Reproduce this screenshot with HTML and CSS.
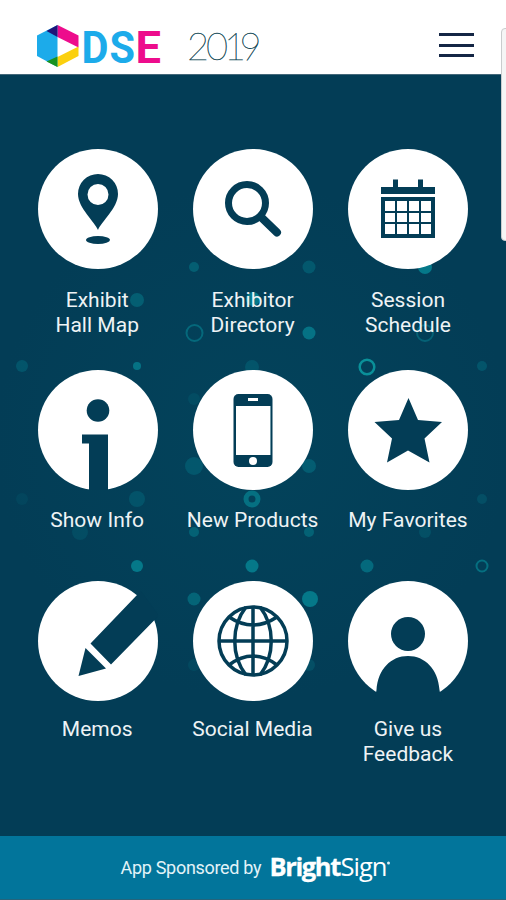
FILE: index.html
```html
<!DOCTYPE html>
<html lang="en">
<head>
<meta charset="utf-8">
<title>DSE 2019</title>
<link rel="stylesheet" href="styles.css">
</head>
<body>
<div class="app">
  <header class="header">
    <svg class="brand" width="240" height="74" viewBox="30 0 240 74">
      <path fill="#1cabea" d="M37 35.5 57.500 25V67L37 56z"/>
      <path fill="#ed0c8c" d="M57.500 25 78.500 35.500V47.500L57.500 37z"/>
      <path fill="#fbd00e" d="M57.500 57 78.500 46.500V56L57.500 67z"/>
      <path fill="#1f1478" d="M46.500 31 57.500 25V37z"/>
      <path fill="#17921f" d="M46.500 61.500 57.500 56.500V67z"/>
      <text class="dse" y="62.500"><tspan x="81.500" textLength="27" lengthAdjust="spacingAndGlyphs">D</tspan><tspan x="109.500" textLength="25.500" lengthAdjust="spacingAndGlyphs">S</tspan><tspan class="dse-e" x="135.500" textLength="25.500" lengthAdjust="spacingAndGlyphs">E</tspan></text>
      <text class="year" x="187 206 224 239.500" y="60">2019</text>
    </svg>
    <div class="menu"><i></i><i></i><i></i></div>
  </header>

  <main class="home">
    <svg class="network" width="506" height="761" viewBox="0 75 506 761">
      <g fill="#057889">
        <circle cx="137" cy="300" r="7" opacity=".55"/>
        <circle cx="194" cy="267" r="5" opacity=".55"/>
        <circle cx="309" cy="267" r="6.500" opacity=".45"/>
        <circle cx="309" cy="333" r="6.500" opacity=".9"/>
        <circle cx="253" cy="299" r="7"/>
        <circle cx="425" cy="267" r="7"/>
        <circle cx="22" cy="366" r="6" opacity=".4"/>
        <circle cx="137" cy="366" r="4" opacity=".9"/>
        <circle cx="482" cy="366" r="5" opacity=".4"/>
        <circle cx="252" cy="367" r="7" opacity=".35"/>
        <circle cx="194" cy="399" r="6" opacity=".2"/>
        <circle cx="194" cy="466" r="9" opacity=".4"/>
        <circle cx="309" cy="466" r="7" opacity=".5"/>
        <circle cx="137" cy="499" r="8" opacity=".35"/>
        <circle cx="22" cy="499" r="6" opacity=".15"/>
        <circle cx="80" cy="532" r="8" opacity=".25"/>
        <circle cx="194" cy="532" r="5" opacity=".6"/>
        <circle cx="309" cy="532" r="5" opacity=".6"/>
        <circle cx="425" cy="532" r="6" opacity=".3"/>
        <circle cx="482" cy="499" r="5" opacity=".3"/>
        <circle cx="137" cy="566" r="6"/>
        <circle cx="252" cy="566" r="6.500"/>
        <circle cx="367" cy="566" r="6.500" opacity=".75"/>
        <circle cx="194" cy="599" r="6.500" opacity=".65"/>
        <circle cx="310" cy="599" r="8"/>
        <circle cx="194" cy="665" r="6" opacity=".2"/>
        <circle cx="309" cy="665" r="6" opacity=".3"/>
      </g>
      <g fill="none" stroke="#078493" stroke-width="2">
        <circle cx="194.500" cy="333" r="8" opacity=".6"/>
        <circle cx="425" cy="333" r="8" opacity=".5"/>
        <circle cx="367" cy="367" r="7.300" stroke-width="2.500" stroke="#0a9099"/>
        <circle cx="252" cy="499" r="6" stroke-width="5" opacity=".7"/>
        <circle cx="482" cy="566" r="5.500" opacity=".7"/>
      </g>
    </svg>

    <div class="grid">
      <a class="tile">
        <svg class="icon" viewBox="-60 -60 120 120"><circle class="disc" r="60"/>
          <path class="ink" fill-rule="evenodd" d="M0 21C-3 13-20-1-20-15A20 20 0 0 1 20-15C20-1 3 13 0 21zM0-25a10.500 10.500 0 1 0 0 21a10.500 10.500 0 1 0 0-21z"/>
          <ellipse class="ink" cy="31" rx="12" ry="4"/></svg>
        <span>Exhibit<br>Hall Map</span>
      </a>
      <a class="tile">
        <svg class="icon" viewBox="-60 -60 120 120"><circle class="disc" r="60"/>
          <circle class="line" cx="-6" cy="-6" r="18.500" stroke-width="7"/>
          <path class="line" stroke-width="8" stroke-linecap="round" d="M9 9 24 23.500"/></svg>
        <span>Exhibitor<br>Directory</span>
      </a>
      <a class="tile">
        <svg class="icon" viewBox="-60 -60 120 120"><circle class="disc" r="60"/>
          <path class="ink" d="M-27-22h12v-7.500h5V-22h20v-7.500h5V-22h12v7h-54z"/>
          <path class="line" stroke-width="4" d="M-25-10h50v37h-50z"/>
          <path class="line" stroke-width="2" d="M-12-10v37M0-10v37M12-10v37M-25 3h50M-25 14h50"/></svg>
        <span>Session<br>Schedule</span>
      </a>
      <a class="tile">
        <svg class="icon" viewBox="-60 -60 120 120"><circle class="disc" r="60"/>
          <circle class="ink" cx="0" cy="-19.500" r="11.300"/>
          <path class="ink" d="M-16 4.500H10V62H-9V13.500h-7z"/></svg>
        <span>Show Info</span>
      </a>
      <a class="tile">
        <svg class="icon" viewBox="-60 -60 120 120"><circle class="disc" r="60"/>
          <rect class="ink" x="-19.500" y="-36" width="39" height="73" rx="5"/>
          <path fill="#fff" d="M-17-24h34v49h-34zM-5-32H5v3H-5z"/>
          <path stroke="#6f98a6" stroke-width="1" d="M17.500-24V25"/>
          <circle fill="#fff" cx="0" cy="31" r="4"/></svg>
        <span>New Products</span>
      </a>
      <a class="tile">
        <svg class="icon" viewBox="-60 -60 120 120"><circle class="disc" r="60"/>
          <path class="ink" d="M.500-32 10-10 34-8 16.500 8.500 21.500 32.500 0 20.500-21 32.500-16 8.500-33.500-8-9-10z"/></svg>
        <span>My Favorites</span>
      </a>
      <a class="tile">
        <svg class="icon" viewBox="-60 -60 120 120"><circle class="disc" r="60"/>
          <path class="ink" d="M-7.500 2.500 38.500-45.500 43-50 61-25 57-21.500 13 23.500zM-12.500 7 8 27.500-19.500 35z"/></svg>
        <span>Memos</span>
      </a>
      <a class="tile">
        <svg class="icon" viewBox="-60 -60 120 120"><circle class="disc" r="60"/>
          <g class="line" stroke-width="3.500"><circle r="34" cy="0"/><path d="M0-34v68M-34 0h68M-7-34C-22-15-22 15-7 34M7-34C22-15 22 15 7 34M-24-24Q0-8 24-24M-24 24Q0 6 24 24"/></g></svg>
        <span>Social Media</span>
      </a>
      <a class="tile">
        <svg class="icon" viewBox="-60 -60 120 120"><circle class="disc" r="60"/>
          <circle class="ink" cx="0" cy="-7" r="17"/>
          <path class="ink" d="M-31.500 49C-30 28-17 15 0 15S30 28 31.500 49L34 62H-34z"/></svg>
        <span>Give us<br>Feedback</span>
      </a>
    </div>
  </main>

  <footer class="sponsor">
    <span class="sponsor-text">App Sponsored by</span>
    <svg class="sponsor-logo" width="122" height="40" viewBox="270 848 122 40">
      <text class="bright" y="875.500" x="269.500">Bright<tspan class="sign" x="340.500">Sign</tspan></text>
      <circle cx="388.500" cy="863" r="1.500" fill="#d5edf4"/>
    </svg>
  </footer>
  <div class="scrollbar"></div>
</div>
</body>
</html>
```
FILE: styles.css
```css
body {
  margin: 0;
  font-family: Roboto, "Liberation Sans", sans-serif;
}

.app {
  position: relative;
  display: flex;
  flex-direction: column;
  width: 506px;
  height: 900px;
  overflow: hidden;
  background: #033d56;
}

.header {
  display: flex;
  justify-content: space-between;
  box-sizing: border-box;
  height: 75px;
  padding: 0 32px 0 30px;
  background: #fff;
  border-bottom: 1px solid #44687a;
}

.brand {
  overflow: visible;
}

.dse {
  font: 700 45px Roboto, sans-serif;
  fill: #1cabea;
}

.dse-e {
  fill: #ed0c8c;
}

.year {
  font: 100 38px Lato, sans-serif;
  fill: #164b58;
  stroke: #164b58;
  stroke-width: 0.4px;
}

.menu {
  display: flex;
  flex-direction: column;
  gap: 7.5px;
  width: 35px;
  padding-top: 33px;
}

.menu i {
  height: 3px;
  background: #142645;
}

.home {
  position: relative;
  flex: 1;
  background: radial-gradient(circle at 50% 48%, #03435b 0, #033d56 55%);
}

.network {
  position: absolute;
  inset: 0;
}

.grid {
  position: relative;
  display: grid;
  grid-template-columns: repeat(3, 155.4px);
  grid-template-rows: 221px 211px 200px;
  padding: 74px 20px 0;
}

.tile {
  display: flex;
  flex-direction: column;
  align-items: center;
  gap: 18.5px;
  color: #eef3f5;
  font-size: 21px;
  line-height: 25px;
  letter-spacing: 0.03px;
  text-align: center;
  white-space: nowrap;
}

.tile span {
  margin-right: 1px;
}

.tile:nth-child(n + 4) {
  gap: 17.5px;
}

.tile:nth-child(n + 7) {
  gap: 16px;
}

.icon {
  width: 120px;
  height: 120px;
}

.disc {
  fill: #fff;
}

.ink {
  fill: #033d56;
}

.line {
  fill: none;
  stroke: #033d56;
}

.sponsor {
  display: flex;
  align-items: center;
  gap: 8.5px;
  box-sizing: border-box;
  height: 64px;
  padding-left: 120.5px;
  background: #02759b;
  border-bottom: 1px solid #25647b;
}

.sponsor-text {
  width: 141px;
  color: #e3f3f8;
  font-size: 18px;
  letter-spacing: -0.3px;
  white-space: nowrap;
}

.sponsor-logo {
  overflow: visible;
}

.bright {
  font: 700 25.5px "Open Sans", sans-serif;
  letter-spacing: -1.4px;
  fill: #fff;
  stroke: #fff;
  stroke-width: 0.3px;
}

.sign {
  font-weight: 400;
  letter-spacing: -1px;
  stroke: none;
}

.scrollbar {
  position: absolute;
  top: 28px;
  right: -6px;
  box-sizing: border-box;
  width: 11px;
  height: 213px;
  background: #f5f5f5;
  border: 1px solid #c9cccd;
  border-radius: 4px;
}
```
